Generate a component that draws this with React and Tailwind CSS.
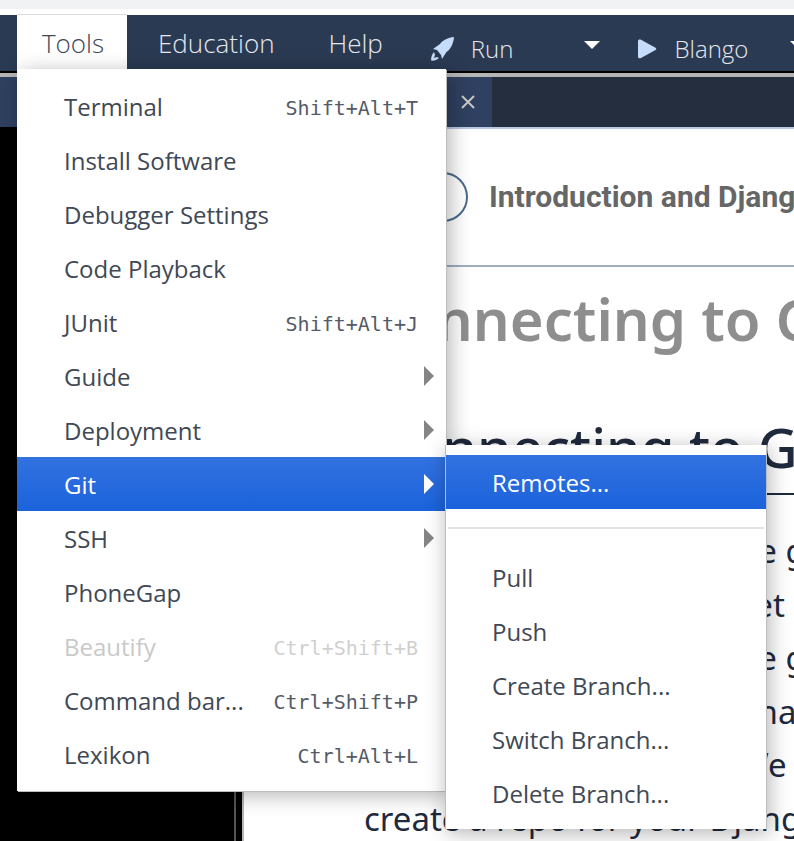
import React from 'react'

const tools = [
  { label: 'Terminal', keys: 'Shift+Alt+T' },
  { label: 'Install Software' },
  { label: 'Debugger Settings' },
  { label: 'Code Playback' },
  { label: 'JUnit', keys: 'Shift+Alt+J' },
  { label: 'Guide', sub: true },
  { label: 'Deployment', sub: true },
  { label: 'Git', sub: true, active: true },
  { label: 'SSH', sub: true },
  { label: 'PhoneGap' },
  { label: 'Beautify', keys: 'Ctrl+Shift+B', disabled: true },
  { label: 'Command bar...', keys: 'Ctrl+Shift+P' },
  { label: 'Lexikon', keys: 'Ctrl+Alt+L' },
]

const gitItems = ['Pull', 'Push', 'Create Branch...', 'Switch Branch...', 'Delete Branch...']

// only the tail of these lines shows past the submenu
const bodyLines = [
  { text: 'the g', pad: 'pl-[482px]' },
  { text: 'get', pad: 'pl-[490px]' },
  { text: 'the g', pad: 'pl-[482px]' },
  { text: 'terminal', pad: 'pl-[430px]' },
  { text: 'We', pad: 'pl-[494px]' },
  { text: 'create a repo for your Django', pad: 'pl-[120px]' },
]

const Caret = ({ className }) => (
  <svg className={className} viewBox="0 0 16 8" fill="currentColor"><path d="M0 0h16L8 8z" /></svg>
)

const Arrow = ({ className }) => (
  <svg className={className} viewBox="0 0 10 20" fill="currentColor"><path d="M0 0l10 10L0 20z" /></svg>
)

const MenuRow = ({ item, rowClass = 'pl-[47px] pt-[1px]' }) => (
  <div className={`flex h-[54px] items-center justify-between pr-[17px] ${rowClass} ${item.active ? 'bg-gradient-to-b from-[#3272e0] to-[#1a62dc] text-white' : item.disabled ? 'text-[#c9c9c9]' : 'text-[#414855]'}`}>
    <span>{item.label}</span>
    {item.keys && <span className={`mr-[11px] mt-[2px] font-['DejaVu_Sans_Mono',monospace] text-[20px] leading-none ${item.disabled ? 'text-[#d0d0d0]' : 'text-[#555b66]'}`}>{item.keys}</span>}
    {item.sub && <Arrow className={`-mr-[5px] -mt-[1px] h-5 w-[10px] ${item.active ? 'text-white' : 'text-[#858585]'}`} />}
  </div>
)

export default function App() {
  return (
    <div className="relative h-[841px] w-[794px] overflow-hidden bg-white font-['Open_Sans',sans-serif]">
      <div className="h-[9px] bg-[#f0f2f4]" />
      <div className="h-[6px] bg-white" />

      <header className="flex h-[56px] items-center overflow-hidden bg-[#2a3a52] text-[26px] font-light text-[#e4e8ee]">
        <div className="w-[127px] shrink-0" />
        <span className="ml-[31px] mt-[1px] shrink-0">Education</span>
        <span className="ml-[54px] mt-[1px] shrink-0">Help</span>
        <svg className="ml-[46px] mt-[11px] h-[26px] w-[26px] shrink-0 text-[#c5dcfb]" viewBox="0 0 26 26" fill="currentColor">
          <path d="M25 1C19 1.500 14 4 11 8L4 13l4 1 4 5 1 4 4.500-7C22 13 24.500 7 25 1z" />
          <path d="M5 16C3 18 2 21 2 24.500 5 25 8 24 10 22L8 21 5 22 6 19z" />
        </svg>
        <span className="ml-[16px] mt-[11px] shrink-0 text-[24px]">Run</span>
        <Caret className="ml-[71px] mt-[3px] h-2 w-4 shrink-0 text-white" />
        <svg className="ml-[37px] mt-[12px] h-5 w-5 shrink-0 text-[#c5dcfb]" viewBox="0 0 20 20" fill="currentColor"><path d="M1 2c0-1.500 1.500-2 3-1.300l14.500 8c1 .5 1 1.800 0 2.300l-14.500 8c-1.500.7-3 .2-3-1.300z" /></svg>
        <span className="ml-[17px] mt-[11px] shrink-0 text-[24px]">Blango</span>
        <Caret className="ml-[42px] mt-[3px] h-2 w-4 shrink-0 text-white" />
      </header>

      <div className="h-[2px] bg-black" />
      <div className="h-[4px] bg-[#b5b5b5]" />
      <div className="flex h-[50px] bg-[#242e3e]">
        <div className="flex w-[492px] justify-end bg-[#2f4060] pr-[17px]">
          <svg className="mt-[18px] h-[14px] w-[14px] text-[#c8c8c8]" viewBox="0 0 14 14" fill="none" stroke="currentColor" strokeWidth="2"><path d="M1 1l12 12M13 1L1 13" /></svg>
        </div>
      </div>

      <div className="flex h-[714px]">
        <div className="w-[234px] shrink-0 bg-black" />
        <div className="w-[2px] shrink-0 bg-[#555]" />
        <div className="w-[6px] shrink-0 bg-black" />
        <main className="min-w-0 flex-1 overflow-hidden border-l-2 border-t-2 border-l-[#b5b5b5] border-t-[#b9c7e0] font-['Noto_Sans',sans-serif] text-[#1f2a3d]">
          <div className="flex h-[138px] items-center border-b-2 border-[#a0aec0] pl-[174px]">
            <div className="h-[50px] w-[50px] shrink-0 rounded-full border-2 border-[#4a6a8e]" />
            <span className="ml-[21px] -mt-[1px] whitespace-nowrap font-['Roboto',sans-serif] text-[30px] font-bold text-[#666]">Introduction and Django</span>
          </div>
          <h1 className="mt-[12px] whitespace-nowrap pl-[119px] text-[58px] font-semibold leading-[80px] text-[#8e8e8e]">Connecting to GitHub</h1>
          <h2 className="mt-[52px] whitespace-nowrap border-b-2 border-[#1f2a3d] pb-[10px] pl-[130px] text-[55px] font-medium leading-[72px]">Connecting to GitHub</h2>
          <div className="mt-[29px] text-[33px] leading-[53.600px]">
            {bodyLines.map((line, i) => (
              <p key={i} className={`whitespace-nowrap ${line.pad}`}>{line.text}</p>
            ))}
          </div>
        </main>
      </div>

      <div className="absolute left-[17px] top-[14px] flex h-[55px] w-[110px] items-center justify-center border-t border-[#ddd] bg-white pl-[2px] pt-[2px] text-[26px] font-light text-[#414855]">Tools</div>

      <div className="absolute left-[17px] top-[69px] w-[429px] bg-white py-[10px] text-[24px] shadow-[1px_1px_0_#bdbdbd,4px_4px_20px_rgba(0,0,0,0.3)]">
        {tools.map((item) => <MenuRow key={item.label} item={item} />)}
      </div>

      <div className="absolute left-[445px] top-[445px] w-[322px] border-x border-[#bdbdbd] bg-white pb-[8px] pt-[10px] text-[24px] shadow-[2px_4px_20px_rgba(0,0,0,0.3)]">
        <MenuRow item={{ label: 'Remotes...', active: true }} rowClass="pl-[46px] pt-[1px]" />
        <div className="mx-[2px] mb-[22px] mt-[18px] h-[2px] bg-[#e3e3e3]" />
        {gitItems.map((label) => <MenuRow key={label} item={{ label }} rowClass="pl-[46px] pb-[1px]" />)}
      </div>
    </div>
  )
}
